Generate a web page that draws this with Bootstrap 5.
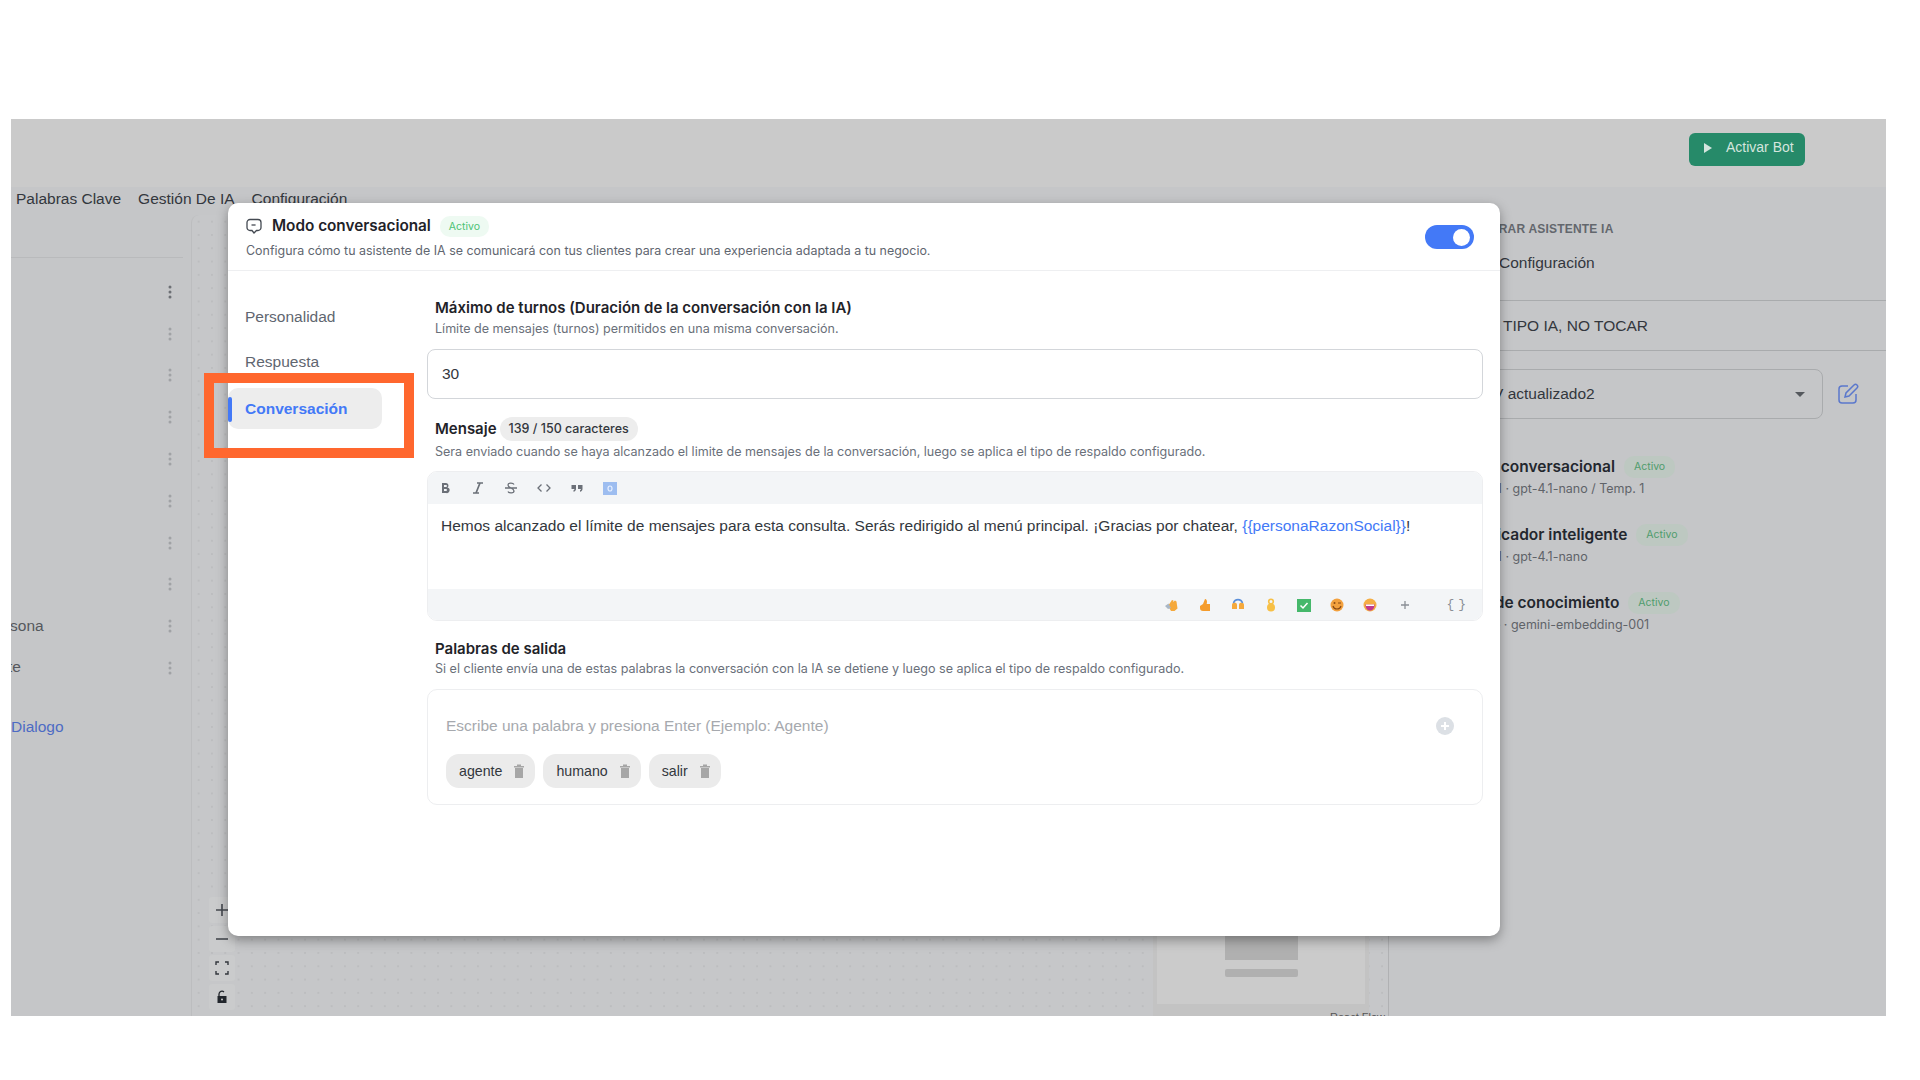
<!DOCTYPE html>
<html lang="es">
<head>
  <meta charset="UTF-8" />
  <meta name="viewport" content="width=device-width, initial-scale=1.0"/>
  <title>Modo conversacional</title>
  <link href="https://cdn.jsdelivr.net/npm/bootstrap@5.3.0/dist/css/bootstrap.min.css" rel="stylesheet">
  <style>
    body { background: #fff; font-family: "Liberation Sans", Arial, sans-serif; color: #2b3038; }
    .page-wrap { padding: 119px 0 0 11px; height: 1080px; overflow: hidden; }
    .app-frame { width: 1875px; height: 897px; overflow: hidden; background: #c5c6c8; }
    .top-strip { height: 68px; background: #cacaca; padding: 14px 81px 0 0; }
    .bot-btn { width: 116px; height: 33px; background: #268a69; border-radius: 6px; color: #d4e5de; font-size: 14px; padding: 4px 0 0 14px; gap: 13px; }
    .bot-btn svg { margin-top: 5px; }
    .under-top { height: 829px; }
    .left-area { width: 1378px; }
    .tab-strip { height: 28px; padding: 1px 0 0 5px; gap: 17px; font-size: 15.5px; color: #33373d; line-height: 22px; }
    .tab-strip span { white-space: nowrap; }
    .list-col { width: 180px; }
    .list-head { height: 43px; width: 172px; border-bottom: 1px solid #b9babc; }
    .list-rows { padding-top: 13px; }
    .list-row { height: 41.8px; width: 172px; font-size: 15.5px; color: #55585d; padding-right: 11px; }
    .row-name { margin: -2px 0 0 -25px; white-space: nowrap; }
    .row-name-end { margin-left: -3px; }
    .dialog-link { color: #4d6bc4; font-size: 15.5px; margin-top: 26px; }
    .flow-canvas { width: 1198px; border-left: 1px solid #bcbdbf; border-right: 1px solid #b0b1b3; border-top-left-radius: 8px;
      background-color: #c6c7c9; background-image: radial-gradient(#bcbdbf 1px, transparent 1.2px); background-size: 13.3px 13.3px; }
    .zoom-btns { position: absolute; left: 17px; top: 682px; gap: 3px; }
    .zoom-btn { width: 26px; height: 26px; background: #cacbcc; border-radius: 3px; }
    .mini-map { position: absolute; right: 19px; bottom: 0; width: 216px; height: 90px; background: #c3c3c3; padding: 0 4px 12px; }
    .mini-inner { height: 100%; background: #cbcbcb; }
    .mini-top { width: 73px; height: 34px; background: #b0b0b0; }
    .mini-bar { width: 73px; height: 8px; background: #b0b0b0; border-radius: 2px; margin-top: 9px; }
    .flow-credit { position: absolute; right: 3px; bottom: -9px; font-size: 11px; color: #555; }
    .side-panel { width: 497px; padding: 33px 0 0 0; font-size: 15.5px; }
    .panel-over { font-size: 12px; font-weight: 600; color: #63676d; letter-spacing: .2px; padding-left: 53px; height: 31px; white-space: nowrap; }
    .panel-cfg { padding-left: 110px; height: 50px; color: #33373d; border-bottom: 1px solid #a9abad; }
    .panel-tipo { padding: 13px 0 0 114px; height: 50px; color: #33373d; border-bottom: 1px solid #a9abad; }
    .panel-sel-row { padding: 18px 0 0 0; }
    .panel-sel { width: 368px; margin-left: 66px; height: 50px; border: 1px solid #a9abad; border-radius: 8px; padding: 0 17px 0 37px; color: #33373d; }
    .sel-caret { width: 0; height: 0; border-left: 5px solid transparent; border-right: 5px solid transparent; border-top: 5px solid #55585d; }
    .edit-icon { margin-left: 14px; }
    .panel-items { padding: 37px 0 0 65px; }
    .panel-item { height: 68px; }
    .item-name { font-family: Inter, sans-serif; font-weight: 600; font-size: 15.5px; color: #23272e; white-space: nowrap; line-height: 20px; }
    .item-sub { font-family: Inter, sans-serif; font-size: 12.5px; color: #5f6368; margin: 2px 0 0 4px; white-space: nowrap; }
    .item-pill { font-family: Inter, sans-serif; font-size: 10.5px; color: #4f9c6c; background: #bdc8c1; border-radius: 10px; padding: 3px 10px; margin-left: 1px; }

    /* modal */
    .conv-modal { position: absolute; left: 217px; top: 84px; width: 1272px; height: 733px; background: #fff; border-radius: 10px; box-shadow: 0 4px 12px rgba(0,0,0,.35); font-family: Inter, "Liberation Sans", sans-serif; }
    .conv-head { height: 68px; border-bottom: 1px solid #eeeff1; padding: 12px 26px 0 18px; }
    .conv-title { font-size: 15.3px; font-weight: 600; color: #1f2329; margin-left: 10px; }
    .conv-sub { font-size: 12.45px; color: #5f6670; margin-top: 4px; }
    .pill-on { font-size: 10.5px; color: #4cc274; background: #eefaf2; border-radius: 10px; padding: 3px 9px; margin-left: 9px; }
    .conv-toggle { width: 49px; height: 24px; border-radius: 12px; background: #4379f7; margin-top: 10px; padding: 4px 4px 0 0; }
    .toggle-knob { width: 17px; height: 17px; background: #fff; border-radius: 50%; }
    .conv-body { height: 664px; }
    .conv-nav { width: 199px; padding-top: 25px; font-family: "Liberation Sans", sans-serif; }
    .conv-link { height: 41px; line-height: 41px; padding-left: 17px; font-size: 15.5px; color: #5f6670; margin-bottom: 4px; width: 154px; position: relative; }
    .conv-link.sel-link { background: #ededed; color: #4379f7; font-weight: 700; border-radius: 10px; margin-top: 6px; }
    .conv-link.sel-link::before { content: ""; position: absolute; left: 0; top: 9px; width: 3.5px; height: 25px; background: #4379f7; border-radius: 2px; }
    .conv-main { width: 1056px; padding-top: 28px; }
    .sec-title { font-size: 15px; font-weight: 600; color: #1f2329; padding-left: 8px; line-height: 18px; }
    .sec-help { font-size: 12.55px; color: #6a707a; padding-left: 8px; line-height: 15px; margin-top: 4px; }
    .help-tight { margin-top: 3px; }
    .turns-input { height: 50px; border: 1px solid #d3d6da; border-radius: 8px; padding: 0 14px; font-size: 15.5px; font-family: "Liberation Sans", sans-serif; color: #33373d; margin: 13px 0 18px; line-height: 48px; }
    .count-pill { font-size: 12.5px; font-weight: 500; background: #ededed; color: #33373d; border-radius: 12px; padding: 3px 9px; margin-left: 3px; }
    .msg-box { height: 150px; border: 1px solid #edeef0; border-radius: 10px; margin-top: 12px; overflow: hidden; }
    .msg-tools { height: 32px; background: #f3f5f7; padding-left: 10px; gap: 19px; color: #6b7078; }
    .msg-tools svg { flex: none; }
    .msg-text { height: 85px; padding: 10px 13px; font-family: "Liberation Sans", sans-serif; font-size: 15.5px; color: #33373d; white-space: nowrap; }
    .var-token { color: #4379f7; }
    .msg-foot { height: 32px; background: #f3f5f7; padding-right: 18px; gap: 19px; color: #8a8f96; }
    .msg-foot svg { flex: none; }
    .add-emoji { margin-left: 3px; }
    .brace-btn { font-family: "Liberation Mono", monospace; font-size: 13px; letter-spacing: -2px; margin-left: 17px; }
    .exit-title { margin-top: 19px; }
    .words-box { height: 116px; border: 1px solid #edeef0; border-radius: 10px; margin-top: 13px; padding: 24px 28px 0 18px; font-family: "Liberation Sans", sans-serif; }
    .words-ph { font-size: 15.5px; color: #a6a9ae; }
    .word-row { margin-top: 17px; gap: 8px; }
    .word-chip { height: 34px; background: #ebebeb; border-radius: 13px; font-size: 14.2px; color: #33373d; padding: 0 10px 0 13px; gap: 11px; }
    .orange-box { position: absolute; left: 193px; top: 254px; width: 210px; height: 85px; border: 10px solid #ff672e; }
  </style>
</head>
<body>
  <div class="page-wrap">
    <div class="app-frame position-relative">
      <div class="top-strip d-flex justify-content-end">
        <div class="bot-btn d-flex">
          <svg width="10" height="12" viewBox="0 0 10 12"><path d="M1 1l8 5-8 5z" fill="#d4e5de"/></svg>
          <span>Activar Bot</span>
        </div>
      </div>

      <div class="under-top d-flex">
        <div class="left-area d-flex flex-column">
          <div class="tab-strip d-flex">
            <span>Palabras Clave</span><span>Gestión De IA</span><span>Configuración</span>
          </div>
          <div class="d-flex flex-grow-1">
            <div class="list-col">
              <div class="list-head"></div>
              <div class="list-rows" id="filas"></div>
              <div class="dialog-link">Dialogo</div>
            </div>
            <div class="flow-canvas position-relative">
              <div class="zoom-btns d-flex flex-column">
                <div class="zoom-btn d-flex align-items-center justify-content-center"><svg width="14" height="14" viewBox="0 0 14 14"><path d="M7 1v12M1 7h12" stroke="#44484e" stroke-width="1.6"/></svg></div>
                <div class="zoom-btn d-flex align-items-center justify-content-center"><svg width="14" height="14" viewBox="0 0 14 14"><path d="M1 7h12" stroke="#44484e" stroke-width="1.6"/></svg></div>
                <div class="zoom-btn d-flex align-items-center justify-content-center"><svg width="14" height="14" viewBox="0 0 14 14"><path d="M1 4V1h3M10 1h3v3M13 10v3h-3M4 13H1v-3" fill="none" stroke="#33373d" stroke-width="1.4"/></svg></div>
                <div class="zoom-btn d-flex align-items-center justify-content-center"><svg width="14" height="14" viewBox="0 0 14 14"><path d="M4 6V4a3 3 0 0 1 5-2" fill="none" stroke="#22262c" stroke-width="1.3"/><path d="M2.500 6h9v7h-9z" fill="#22262c"/><circle cx="7" cy="9.500" r="1" fill="#ccc"/></svg></div>
              </div>
              <div class="mini-map">
                <div class="mini-inner d-flex flex-column align-items-center">
                  <div class="mini-top"></div>
                  <div class="mini-bar"></div>
                </div>
              </div>
              <div class="flow-credit">React Flow</div>
            </div>
          </div>
        </div>

        <div class="side-panel">
          <div class="panel-over">CONFIGURAR ASISTENTE IA</div>
          <div class="panel-cfg">Configuración</div>
          <div class="panel-tipo">TIPO IA, NO TOCAR</div>
          <div class="panel-sel-row d-flex align-items-center">
            <div class="panel-sel d-flex align-items-center justify-content-between">
              <span>V actualizado2</span><span class="sel-caret"></span>
            </div>
            <svg class="edit-icon" width="22" height="22" viewBox="0 0 22 22" fill="none" stroke="#5b78cc" stroke-width="1.5"><path d="M11 3H5a3 3 0 0 0-3 3v11a3 3 0 0 0 3 3h11a3 3 0 0 0 3-3v-6"/><path d="M8 14l1-4 8-8a2 2 0 0 1 3 3l-8 8z"/></svg>
          </div>
          <div class="panel-items">
            <div class="panel-item">
              <div class="d-flex align-items-center gap-2"><span class="item-name">Modo conversacional</span><span class="item-pill">Activo</span></div>
              <div class="item-sub">OpenAI · gpt-4.1-nano / Temp. 1</div>
            </div>
            <div class="panel-item">
              <div class="d-flex align-items-center gap-2"><span class="item-name">Clasificador inteligente</span><span class="item-pill">Activo</span></div>
              <div class="item-sub">OpenAI · gpt-4.1-nano</div>
            </div>
            <div class="panel-item">
              <div class="d-flex align-items-center gap-2"><span class="item-name">Base de conocimiento</span><span class="item-pill">Activo</span></div>
              <div class="item-sub">Google · gemini-embedding-001</div>
            </div>
          </div>
        </div>
      </div>

      <div class="conv-modal">
        <div class="conv-head d-flex justify-content-between">
          <div>
            <div class="d-flex align-items-center">
              <svg width="16" height="16" viewBox="0 0 16 16" fill="none" stroke="#444a52" stroke-width="1.3"><path d="M4 1.500h8a3 3 0 0 1 3 3v5a3 3 0 0 1-3 3h-1.500L8 15l-2-2.500H4a3 3 0 0 1-3-3v-5a3 3 0 0 1 3-3z"/><path d="M5.500 7h4"/></svg>
              <span class="conv-title">Modo conversacional</span>
              <span class="pill-on">Activo</span>
            </div>
            <div class="conv-sub">Configura cómo tu asistente de IA se comunicará con tus clientes para crear una experiencia adaptada a tu negocio.</div>
          </div>
          <div class="conv-toggle d-flex justify-content-end"><div class="toggle-knob"></div></div>
        </div>
        <div class="conv-body d-flex">
          <div class="conv-nav">
            <div class="conv-link">Personalidad</div>
            <div class="conv-link">Respuesta</div>
            <div class="conv-link sel-link">Conversación</div>
          </div>
          <div class="conv-main">
            <div class="sec-title">Máximo de turnos (Duración de la conversación con la IA)</div>
            <div class="sec-help">Límite de mensajes (turnos) permitidos en una misma conversación.</div>
            <div class="turns-input">30</div>

            <div class="sec-title d-flex align-items-center">Mensaje <span class="count-pill">139 / 150 caracteres</span></div>
            <div class="sec-help help-tight">Sera enviado cuando se haya alcanzado el limite de mensajes de la conversación, luego se aplica el tipo de respaldo configurado.</div>
            <div class="msg-box">
              <div class="msg-tools d-flex align-items-center">
                <svg width="14" height="14" viewBox="0 0 14 14"><path d="M4 2h4a2.500 2.500 0 0 1 1.500 4.500A2.800 2.800 0 0 1 8 12H4zM6 4v2h2a1 1 0 0 0 0-2zM6 8v2h2a1 1 0 0 0 0-2z" fill="#6b7078" fill-rule="evenodd"/></svg>
                <svg width="14" height="14" viewBox="0 0 14 14"><path d="M6 2h6M2 12h6M9 2L5 12" stroke="#6b7078" stroke-width="1.700" fill="none"/></svg>
                <svg width="14" height="14" viewBox="0 0 14 14" fill="none" stroke="#6b7078" stroke-width="1.300"><path d="M1 7h12M10 3.500C9 1.500 4 1.500 4 4c0 3 6 3 6 6 0 2.500-5 2.500-6 .5"/></svg>
                <svg width="14" height="14" viewBox="0 0 14 14" fill="none" stroke="#6b7078" stroke-width="1.300"><path d="M4.500 3.500L1 7l3.500 3.500M9.500 3.500L13 7l-3.500 3.500"/></svg>
                <svg width="14" height="14" viewBox="0 0 14 14" fill="#6b7078"><path d="M1.500 4h4.500v4c0 1.500-1 2.500-2.500 2.700V9.200c.6-.2 1-.6 1-1.200H1.500zM8 4h4.500v4c0 1.500-1 2.500-2.500 2.700V9.200c.6-.2 1-.6 1-1.200H8z"/></svg>
                <svg width="14" height="14" viewBox="0 0 14 14"><path d="M0 1h14v13H0z" fill="#9dbdf0"/><ellipse cx="7" cy="7.500" rx="2" ry="2.500" fill="none" stroke="#e6efff" stroke-width="1.200"/></svg>
              </div>
              <div class="msg-text">Hemos alcanzado el límite de mensajes para esta consulta. Serás redirigido al menú principal. ¡Gracias por chatear, <span class="var-token">{{personaRazonSocial}}</span>!</div>
              <div class="msg-foot d-flex align-items-center justify-content-end">
                <svg width="14" height="14" viewBox="0 0 14 14"><path d="M3 8l4-6 1.500.5L8 4l2-1.500 1.500 1 1 7-3 2.500H6z" fill="#f5a93c"/><path d="M0 8l3.500-2.500L6 10l-3 1z" fill="#a9b7c6"/></svg>
                <svg width="14" height="14" viewBox="0 0 14 14"><path d="M7 1c1.500 0 2 1.500 2 3l-.3 2H12v7H5a3 3 0 0 1-3-3V8l3-2z" fill="#f59c2c"/></svg>
                <svg width="14" height="14" viewBox="0 0 14 14"><path d="M1 11V7a2.500 2.500 0 0 1 5 0v4zM8 11V7a2.500 2.500 0 0 1 5 0v4z" fill="#f5a93c"/><path d="M2.500 5a4.700 4.700 0 0 1 9 0" stroke="#5b8fd9" stroke-width="1.600" fill="none"/></svg>
                <svg width="14" height="14" viewBox="0 0 14 14"><circle cx="7" cy="9.500" r="4" fill="#f7c046"/><circle cx="7" cy="3.500" r="2.300" fill="none" stroke="#f7c046" stroke-width="1.600"/></svg>
                <svg width="14" height="14" viewBox="0 0 14 14"><path d="M0 1h14v13H0z" fill="#45b86b"/><path d="M3.500 7.500L6 10l4.500-5" stroke="#fff" stroke-width="1.500" fill="none"/></svg>
                <svg width="14" height="14" viewBox="0 0 14 14"><circle cx="7" cy="7" r="6.500" fill="#f3a13e"/><path d="M3 8c1 4 7 4 8 0" fill="none" stroke="#8a4a14" stroke-width="1.200"/><circle cx="4.500" cy="5" r="1" fill="#8a4a14"/><path d="M8 5h3" stroke="#8a4a14"/></svg>
                <svg width="14" height="14" viewBox="0 0 14 14"><circle cx="7" cy="7" r="6.500" fill="#f5ae45"/><path d="M2.500 6.500h9c0 4-2 6-4.500 6s-4.500-2-4.500-6z" fill="#c23a8e"/><path d="M3 6.500h8v1.500H3z" fill="#fff"/></svg>
                <svg class="add-emoji" width="12" height="14" viewBox="0 0 12 14"><path d="M6 3v8M2 7h8" stroke="#8a8f96" stroke-width="1.300"/></svg>
                <span class="brace-btn">{ }</span>
              </div>
            </div>

            <div class="sec-title exit-title">Palabras de salida</div>
            <div class="sec-help help-tight">Si el cliente envía una de estas palabras la conversación con la IA se detiene y luego se aplica el tipo de respaldo configurado.</div>
            <div class="words-box">
              <div class="d-flex justify-content-between align-items-center">
                <span class="words-ph">Escribe una palabra y presiona Enter (Ejemplo: Agente)</span>
                <svg width="18" height="18" viewBox="0 0 18 18"><circle cx="9" cy="9" r="9" fill="#dce0e5"/><path d="M9 5v8M5 9h8" stroke="#fff" stroke-width="2"/></svg>
              </div>
              <div class="d-flex word-row">
                <div class="word-chip d-flex align-items-center">agente <svg width="12" height="14" viewBox="0 0 12 14"><path d="M1 2h10v1.500H1zM4 .5h4V2H4zM2 4h8v10H2z" fill="#a6a6a6"/></svg></div>
                <div class="word-chip d-flex align-items-center">humano <svg width="12" height="14" viewBox="0 0 12 14"><path d="M1 2h10v1.500H1zM4 .5h4V2H4zM2 4h8v10H2z" fill="#a6a6a6"/></svg></div>
                <div class="word-chip d-flex align-items-center">salir <svg width="12" height="14" viewBox="0 0 12 14"><path d="M1 2h10v1.500H1zM4 .5h4V2H4zM2 4h8v10H2z" fill="#a6a6a6"/></svg></div>
              </div>
            </div>
          </div>
        </div>
      </div>

      <div class="orange-box"></div>
    </div>
  </div>
  <script src="https://cdn.jsdelivr.net/npm/bootstrap@5.3.0/dist/js/bootstrap.bundle.min.js"></script>
  <script>
    // filas de la lista izquierda, solo las dos ultimas se ven con texto
    const nombres = ['', '', '', '', '', '', '', '', 'Persona', 'te'];
    const dots = c => `<svg width="4" height="14" viewBox="0 0 4 14" fill="${c}"><circle cx="2" cy="2" r="1.500"/><circle cx="2" cy="7" r="1.500"/><circle cx="2" cy="12" r="1.500"/></svg>`;
    document.getElementById('filas').innerHTML = nombres.map((n, i) =>
      `<div class="list-row d-flex justify-content-between align-items-center"><span class="row-name ${i === 9 ? 'row-name-end' : ''}">${n}</span>${dots(i === 0 ? '#6d7075' : '#a0a2a5')}</div>`
    ).join('');
  </script>
</body>
</html>
